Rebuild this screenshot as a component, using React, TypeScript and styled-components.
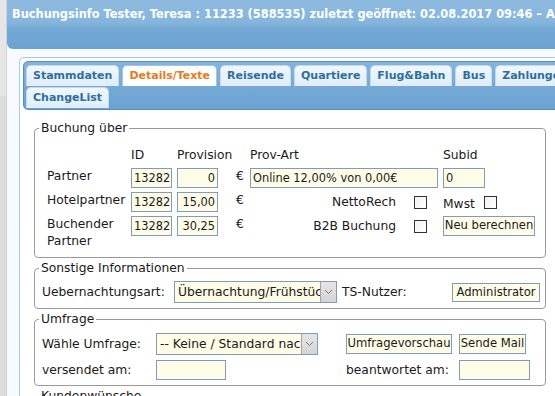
import styled, { createGlobalStyle } from 'styled-components';

const GlobalStyle = createGlobalStyle`
  html, body {
    margin: 0;
    padding: 0;
    width: 555px;
    height: 396px;
    overflow: hidden;
    background: #e3e3e3;
  }
  body {
    font-family: "DejaVu Sans", Verdana, sans-serif;
    font-size: 12.3px;
    color: #1a1a1a;
  }
`;

const Page = styled.div`
  display: flex;
  height: 396px;
`;

const SideStrip = styled.div`
  width: 7px;
  flex: none;
  background: linear-gradient(#e6e6e6 0 96px, #dcdcdc 96px);
  border-right: 1px solid #cdd3d8;
  box-sizing: border-box;
`;

const Dialog = styled.div`
  flex: 1;
  min-width: 0;
  display: flex;
  flex-direction: column;
  background: #f8fbfd;
  overflow: hidden;
`;

const TitleBar = styled.div`
  height: 49px;
  flex: none;
  box-sizing: border-box;
  padding: 8px 0 0 5px;
  background: linear-gradient(#8fbbe0 0%, #86b5dc 45%, #74a9d5 60%, #6ba3d1 100%);
  border-bottom-left-radius: 6px;
  color: #fff;
  font-weight: bold;
  font-size: 11.4px;
  line-height: 13px;
  white-space: nowrap;
`;

const DialogBody = styled.div`
  padding: 8px 0 0 12px;
`;

const TabWidget = styled.div`
  width: 600px;
  box-sizing: border-box;
  border: 1px solid #a9cbe5;
  border-radius: 5px;
  padding: 3px;
  background: #fff;
`;

const TabBar = styled.div`
  display: flex;
  flex-wrap: wrap;
  gap: 1px 3px;
  padding: 3px 3px 1px 2px;
  border: 1px solid #4f8ec6;
  border-radius: 5px;
  background: linear-gradient(#84b3dc, #6aa2d0);
`;

const Tab = styled.div<{ $active?: boolean }>`
  height: 21px;
  box-sizing: border-box;
  padding: 0 6px;
  border: 1px solid ${({ $active }) => ($active ? '#9ec7e8' : '#c5dbec')};
  border-bottom: none;
  border-radius: 5px 5px 0 0;
  background: ${({ $active }) => ($active ? '#fdfeff' : 'linear-gradient(#f1f7fd, #dfeefb)')};
  color: ${({ $active }) => ($active ? '#e57b20' : '#2e6e9e')};
  font-size: 11px;
  font-weight: bold;
  line-height: 20px;
  white-space: nowrap;
`;

const TabPanel = styled.div`
  padding: 11px 0 0 11px;
`;

const Fieldset = styled.fieldset`
  width: 512px;
  box-sizing: border-box;
  margin: 0 0 3px;
  padding: 0;
  border: 1px solid #9a9a9a;
  border-radius: 4px;
`;

const Legend = styled.legend`
  margin-left: 4px;
  padding: 0 2px;
  font-size: 12.3px;
  line-height: 14px;
`;

const BookingGrid = styled.div`
  display: grid;
  grid-template-columns: 84px 46px 59px 14px 193px auto;
  row-gap: 4px;
  padding: 12px 0 7px 12px;
  line-height: 17px;
`;

const ColHead = styled.div`
  height: 17px;
`;

const RowLabel = styled.div`
  line-height: 17px;
`;

const Field = styled.div<{ $w: number; $right?: boolean; $h?: number }>`
  width: ${({ $w }) => $w}px;
  height: ${({ $h }) => $h ?? 20}px;
  box-sizing: border-box;
  border: 1px solid #7f9db9;
  background: #fffde8;
  padding: 0 2px;
  font-size: 11.4px;
  text-align: ${({ $right }) => ($right ? 'right' : 'left')};
  line-height: ${({ $h }) => ($h ?? 20) - 2}px;
  white-space: nowrap;
  overflow: hidden;
`;

const Euro = styled.div`
  line-height: 17px;
`;

const CheckCell = styled.div`
  display: flex;
  justify-content: flex-end;
  align-items: center;
  gap: 18px;
  padding-right: 16px;
  height: 20px;
`;

const MwstCell = styled.div`
  display: flex;
  align-items: center;
  gap: 9px;
  height: 20px;
`;

const MwstLabel = styled.span`
  padding-top: 4px;
`;

const Checkbox = styled.span`
  width: 13px;
  height: 13px;
  box-sizing: border-box;
  border: 1px solid #333;
  background: linear-gradient(135deg, #f2f2f2, #fff);
  flex: none;
`;

const PlainButton = styled.div<{ $w: number; $h?: number }>`
  width: ${({ $w }) => $w}px;
  height: ${({ $h }) => $h ?? 20}px;
  box-sizing: border-box;
  border: 1px solid #7f9db9;
  background: #fffde8;
  font-size: 11.6px;
  text-align: center;
  line-height: ${({ $h }) => ($h ?? 20) - 3}px;
  white-space: nowrap;
  overflow: hidden;
`;

const InfoRow = styled.div`
  display: grid;
  grid-template-columns: 132px 168px 110px auto;
  align-items: center;
  padding: 6px 0 5px 7px;
`;

const SurveyGrid = styled.div`
  display: grid;
  grid-template-columns: 114px 190px 113px auto;
  grid-template-rows: 21px 20px;
  row-gap: 6px;
  align-items: center;
  padding: 7px 0 5px 7px;
`;

const SelectBox = styled.div<{ $w: number }>`
  width: ${({ $w }) => $w}px;
  height: 22px;
  box-sizing: border-box;
  border: 1px solid #7f9db9;
  background: #fffde8;
  display: flex;
  align-items: stretch;
`;

const SelectText = styled.div`
  flex: 1;
  min-width: 0;
  overflow: hidden;
  white-space: nowrap;
  padding-left: 3px;
  line-height: 20px;
`;

const SelectArrow = styled.div`
  width: 16px;
  flex: none;
  box-sizing: border-box;
  border-left: 1px solid #a4a4a4;
  background: linear-gradient(#e6e6e6, #d4d4d4);
  display: flex;
  align-items: center;
  justify-content: center;
`;

const Chevron = () => (
  <svg width="9" height="6" viewBox="0 0 9 6">
    <path d="M1 1 L4.5 4.5 L8 1" fill="none" stroke="#7a7a7a" strokeWidth="1" />
  </svg>
);

const Select = ({ width, value }: { width: number; value: string }) => (
  <SelectBox $w={width}>
    <SelectText>{value}</SelectText>
    <SelectArrow>
      <Chevron />
    </SelectArrow>
  </SelectBox>
);

const tabs = ['Stammdaten', 'Details/Texte', 'Reisende', 'Quartiere', 'Flug&Bahn', 'Bus', 'Zahlungen', 'ChangeList'];

export default function App() {
  return (
    <>
      <GlobalStyle />
      <Page>
        <SideStrip />
        <Dialog>
          <TitleBar>
            Buchungsinfo Tester, Teresa : 11233 (588535) zuletzt geöffnet: 02.08.2017 09:46 – Admin
          </TitleBar>
          <DialogBody>
            <TabWidget>
              <TabBar>
                {tabs.map((t) => (
                  <Tab key={t} $active={t === 'Details/Texte'}>
                    {t}
                  </Tab>
                ))}
              </TabBar>
              <TabPanel>
                <Fieldset>
                  <Legend>Buchung über</Legend>
                  <BookingGrid>
                    <ColHead />
                    <ColHead>ID</ColHead>
                    <ColHead>Provision</ColHead>
                    <ColHead />
                    <ColHead>Prov-Art</ColHead>
                    <ColHead>Subid</ColHead>

                    <RowLabel>Partner</RowLabel>
                    <Field $w={41}>13282</Field>
                    <Field $w={41} $right>
                      0
                    </Field>
                    <Euro>€</Euro>
                    <Field $w={188}>Online 12,00% von 0,00€</Field>
                    <Field $w={42}>0</Field>

                    <RowLabel>Hotelpartner</RowLabel>
                    <Field $w={41}>13282</Field>
                    <Field $w={41} $right>
                      15,00
                    </Field>
                    <Euro>€</Euro>
                    <CheckCell>
                      NettoRech
                      <Checkbox />
                    </CheckCell>
                    <MwstCell>
                      <MwstLabel>Mwst</MwstLabel>
                      <Checkbox />
                    </MwstCell>

                    <RowLabel>
                      Buchender
                      <br />
                      Partner
                    </RowLabel>
                    <Field $w={41}>13282</Field>
                    <Field $w={41} $right>
                      30,25
                    </Field>
                    <Euro>€</Euro>
                    <CheckCell>
                      B2B Buchung
                      <Checkbox />
                    </CheckCell>
                    <PlainButton $w={92}>Neu berechnen</PlainButton>
                  </BookingGrid>
                </Fieldset>

                <Fieldset>
                  <Legend>Sonstige Informationen</Legend>
                  <InfoRow>
                    <span>Uebernachtungsart:</span>
                    <Select width={163} value="Übernachtung/Frühstück" />
                    <span>TS-Nutzer:</span>
                    <PlainButton $w={88} $h={19}>
                      Administrator
                    </PlainButton>
                  </InfoRow>
                </Fieldset>

                <Fieldset>
                  <Legend>Umfrage</Legend>
                  <SurveyGrid>
                    <span>Wähle Umfrage:</span>
                    <Select width={162} value="-- Keine / Standard nach Kunde --" />
                    <PlainButton $w={106}>Umfragevorschau</PlainButton>
                    <PlainButton $w={67}>Sende Mail</PlainButton>
                    <span>versendet am:</span>
                    <Field $w={70} />
                    <span>beantwortet am:</span>
                    <Field $w={71} />
                  </SurveyGrid>
                </Fieldset>

                <Fieldset>
                  <Legend>Kundenwünsche</Legend>
                  <InfoRow />
                </Fieldset>
              </TabPanel>
            </TabWidget>
          </DialogBody>
        </Dialog>
      </Page>
    </>
  );
}
